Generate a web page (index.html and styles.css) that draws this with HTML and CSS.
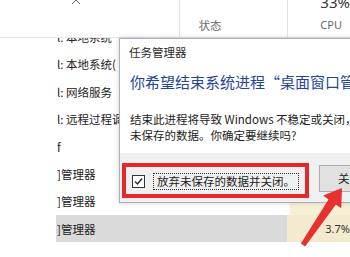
FILE: index.html
```html
<!DOCTYPE html>
<html lang="zh-CN">
<head>
<meta charset="utf-8">
<title>任务管理器</title>
<link rel="stylesheet" href="styles.css">
</head>
<body>
<div class="screen">
  <div class="tm">
    <div class="tm-head">
      <div class="h-name">
        <svg class="chev" width="10" height="6" viewBox="0 0 10 6"><polyline points="1,5 5,1 9,5" fill="none" stroke="#666" stroke-width="1"/></svg>
      </div>
      <div class="h-status">状态</div>
      <div class="h-cpu">
        <div class="pct">33%</div>
        <div class="lbl">CPU</div>
      </div>
    </div>
    <div class="tm-list">
      <div class="rows">
        <div class="row"><span class="c-name">l: 本地系统</span><span class="c-status"></span><span class="c-cpu"></span></div>
        <div class="row"><span class="c-name">l: 本地系统(</span><span class="c-status"></span><span class="c-cpu"></span></div>
        <div class="row"><span class="c-name">l: 网络服务</span><span class="c-status"></span><span class="c-cpu"></span></div>
        <div class="row"><span class="c-name">l: 远程过程调</span><span class="c-status"></span><span class="c-cpu"></span></div>
        <div class="row"><span class="c-name">f</span><span class="c-status"></span><span class="c-cpu"></span></div>
        <div class="row"><span class="c-name">]管理器</span><span class="c-status"></span><span class="c-cpu"></span></div>
        <div class="row"><span class="c-name">]管理器</span><span class="c-status"></span><span class="c-cpu"></span></div>
        <div class="row sel"><span class="c-name">]管理器</span><span class="c-status"></span><span class="c-cpu">3.7%</span></div>
      </div>
    </div>
  </div>

  <div class="dialog">
    <div class="dlg-title">任务管理器</div>
    <div class="dlg-main">你希望结束系统进程“桌面窗口管理器”吗?</div>
    <div class="dlg-body">
      <div>结束此进程将导致 Windows 不稳定或关闭，并会丢失所有</div>
      <div>未保存的数据。你确定要继续吗?</div>
    </div>
    <div class="dlg-foot">
      <span class="chk">
        <svg width="11" height="11" viewBox="0 0 11 11"><polyline points="2,5.5 4.5,8 9,2.5" fill="none" stroke="#222" stroke-width="1.3"/></svg>
      </span>
      <span class="chk-label">放弃未保存的数据并关闭。</span>
      <span class="btn">关闭</span>
    </div>
  </div>

  <div class="mark"></div>

  <svg class="arrow" width="350" height="257" viewBox="0 0 350 257">
    <polygon fill="#e8302f" points="300.9,243.6 305.1,246.4 335.9,204.5 341.2,208.2 342,188 323.2,195.6 328.5,199.4"/>
  </svg>
</div>
</body>
</html>
```
FILE: styles.css
```css
html, body {
  margin: 0;
  padding: 0;
  background: #fff;
}
.screen {
  position: relative;
  width: 350px;
  height: 257px;
  overflow: hidden;
  background: #fff;
  font-family: "Noto Sans CJK SC", "Noto Sans", sans-serif;
  color: #222;
}
.tm-head {
  display: flex;
  height: 37px;
  border-bottom: 1px solid #e2e6ec;
  box-sizing: content-box;
}
.h-name {
  width: 180px;
  padding-left: 71px;
  box-sizing: border-box;
}
.chev {
  display: block;
  margin-top: -1px;
}
.h-status {
  width: 110px;
  box-sizing: border-box;
  border-left: 1px solid #e4e4e4;
  padding: 17px 0 0 19px;
  font-size: 11.5px;
  line-height: 16px;
  color: #6a6a6a;
}
.h-cpu {
  flex: 1;
  border-left: 1px solid #e4e4e4;
  padding-left: 32px;
  white-space: nowrap;
}
.pct {
  font-size: 15px;
  line-height: 18px;
  margin-top: -7px;
  color: #333;
  font-family: "Noto Sans", sans-serif;
}
.lbl {
  margin-top: 6px;
  font-size: 11px;
  line-height: 16px;
  color: #6a6a6a;
  font-family: "Noto Sans", sans-serif;
}
.tm-list {
  height: 219px;
  overflow: hidden;
}
.rows {
  margin-top: -14.7px;
  padding-left: 56px;
}
.row {
  display: flex;
  height: 27.4px;
  align-items: center;
  font-size: 11.5px;
  white-space: nowrap;
}
.c-name {
  width: 124px;
  height: 100%;
  display: flex;
  align-items: center;
  padding-left: 1px;
  box-sizing: border-box;
  overflow: hidden;
}
.c-status {
  width: 110px;
  height: 100%;
}
.c-cpu {
  flex: 1;
  height: 100%;
  display: flex;
  align-items: center;
  padding-left: 38px;
  background: #f8f0d6;
  font-family: "Noto Sans", sans-serif;
  font-size: 11px;
  color: #333;
}
.row.sel .c-name,
.row.sel .c-status {
  background: #dadada;
}
.row.sel .c-cpu {
  background: #f3ead0;
}
.dialog {
  position: absolute;
  left: 119px;
  top: 38px;
  width: 250px;
  height: 163px;
  border: 1px solid #a8b0bd;
  background: #fff;
  box-shadow: 0 0 5px rgba(0, 0, 0, 0.18);
}
.dlg-title {
  height: 33px;
  padding: 5px 0 0 9px;
  box-sizing: border-box;
  font-size: 11.5px;
  line-height: 16px;
  color: #2a2a2a;
  white-space: nowrap;
}
.dlg-main {
  padding-left: 10px;
  font-size: 15px;
  line-height: 20px;
  color: #24449a;
  white-space: nowrap;
}
.dlg-body {
  margin-top: 19px;
  padding-left: 10px;
  font-size: 11.5px;
  line-height: 16px;
  color: #222;
  white-space: nowrap;
}
.dlg-foot {
  margin-top: 10px;
  height: 49px;
  background: #f0f0f0;
  display: flex;
  align-items: flex-start;
  padding-left: 12px;
  white-space: nowrap;
}
.chk {
  margin-top: 22px;
  width: 13px;
  height: 13px;
  box-sizing: border-box;
  border: 1px solid #333;
  background: #fff;
  display: flex;
  align-items: center;
  justify-content: center;
  flex: none;
}
.chk svg {
  display: block;
}
.chk-label {
  margin-top: 20px;
  margin-left: 8px;
  padding: 0 3px;
  height: 15px;
  border: 1px dotted #333;
  font-size: 11.5px;
  line-height: 15px;
  color: #222;
  flex: none;
}
.btn {
  margin-top: 12px;
  margin-left: 20px;
  height: 27px;
  width: 75px;
  box-sizing: border-box;
  border: 1px solid #adadad;
  background: #e1e1e1;
  padding-left: 18px;
  font-size: 11.5px;
  line-height: 25px;
  color: #222;
  flex: none;
}
.mark {
  position: absolute;
  left: 122px;
  top: 163px;
  width: 187px;
  height: 35px;
  box-sizing: border-box;
  border: 4px solid #e5292b;
}
.arrow {
  position: absolute;
  left: 0;
  top: 0;
}
```
